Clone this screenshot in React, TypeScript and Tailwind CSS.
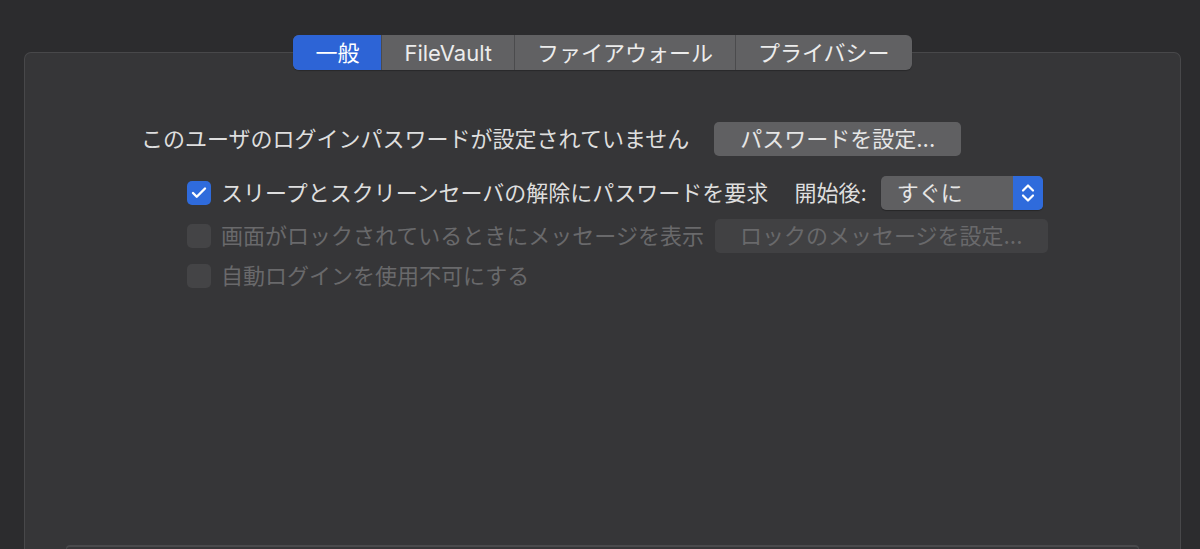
import { Check } from "lucide-react";

const font = "font-['Inter','Noto_Sans_CJK_JP',sans-serif]";

const tabs = ["一般", "FileVault", "ファイアウォール", "プライバシー"];

const Checkbox = ({ checked, disabled }: { checked?: boolean; disabled?: boolean }) => (
  <div
    className={
      checked
        ? "w-[24px] h-[24px] rounded-[5px] bg-[#2f6bdc] flex items-center justify-center shrink-0"
        : "w-[24px] h-[24px] rounded-[5px] bg-[#444446] shrink-0"
    }
  >
    {checked && !disabled && <Check className="w-[18px] h-[18px] text-white" strokeWidth={3.2} />}
  </div>
);

const App = () => {
  return (
    <div className={`w-[1200px] h-[549px] overflow-hidden bg-[#2c2c2e] pt-[52px] pl-[24px] pr-[19px] ${font}`}>
      <div className="h-[520px] rounded-t-[7px] border border-b-0 border-[#48484a] bg-[#363638] flex flex-col">
        {/* segmented tabs */}
        <div className="flex justify-center -mt-[18px]">
          <div className="flex h-[35px] rounded-[6px] overflow-hidden bg-[#616163] shadow-[0_1px_1px_rgba(0,0,0,0.25)]">
            {tabs.map((t, i) => (
              <div
                key={t}
                className={
                  i === 0
                    ? "px-[22px] flex items-center bg-[#2d64d6] text-white text-[22px] leading-none"
                    : "px-[22px] flex items-center border-l border-[#4b4b4d] text-[#ececec] text-[22px] leading-none"
                }
              >
                {t}
              </div>
            ))}
          </div>
        </div>

        {/* settings */}
        <div className="mt-[52px] flex flex-col text-[22px] leading-none">
          <div className="ml-[116px] h-[34px] flex items-center gap-[25px] text-[#dedede]">
            <span>このユーザのログインパスワードが設定されていません</span>
            <div className="h-[34px] px-[26px] rounded-[5px] bg-[#606062] flex items-center text-[#e6e6e6]">
              パスワードを設定...
            </div>
          </div>

          <div className="mt-[20px] ml-[162px] h-[34px] flex items-center text-[#dedede]">
            <Checkbox checked />
            <span className="ml-[10px]">スリープとスクリーンセーバの解除にパスワードを要求</span>
            <span className="ml-[26px]">開始後:</span>
            <div className="ml-[14px] w-[162px] h-[34px] rounded-[5px] bg-[#5f5f61] flex overflow-hidden shadow-[0_1px_1px_rgba(0,0,0,0.3)]">
              <div className="flex-1 flex items-center pl-[16px] text-[#e6e6e6]">すぐに</div>
              <div className="w-[30px] bg-[#2f6bdc] flex items-center justify-center">
                <svg width="16" height="24" viewBox="0 0 16 24" fill="none" stroke="white" strokeWidth="2.2" strokeLinecap="round" strokeLinejoin="round">
                  <path d="M3 9.5 L8 4.5 L13 9.5" />
                  <path d="M3 14.5 L8 19.5 L13 14.5" />
                </svg>
              </div>
            </div>
          </div>

          <div className="mt-[9px] ml-[162px] h-[34px] flex items-center text-[#69696b]">
            <Checkbox disabled />
            <span className="ml-[10px]">画面がロックされているときにメッセージを表示</span>
            <div className="ml-[11px] w-[333px] h-[34px] px-[25px] rounded-[5px] bg-[#414143] flex items-center text-[#69696b]">
              ロックのメッセージを設定...
            </div>
          </div>

          <div className="mt-[6px] ml-[162px] h-[34px] flex items-center text-[#69696b]">
            <Checkbox disabled />
            <span className="ml-[10px]">自動ログインを使用不可にする</span>
          </div>
        </div>

        {/* lower box top edge */}
        <div className="mt-auto mx-[41px] h-[27px] rounded-t-[4px] border-t-2 border-x border-[#4a4a4c] bg-[#363638]" />
      </div>
    </div>
  );
};

export default App;
